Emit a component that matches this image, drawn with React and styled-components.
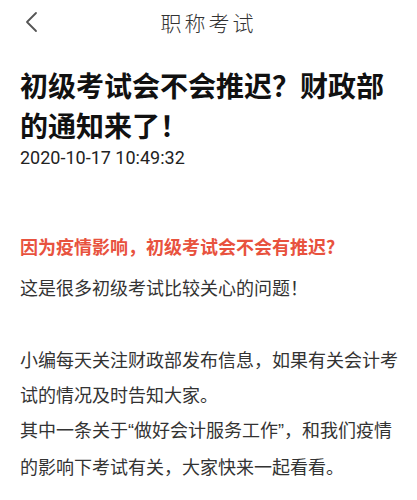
import React from "react";
import styled, { createGlobalStyle } from "styled-components";

const Global = createGlobalStyle`
  html, body { margin: 0; padding: 0; background: #fff; }
  body { font-family: Roboto, "Noto Sans CJK SC", sans-serif; -webkit-font-smoothing: antialiased; }
  * { box-sizing: border-box; }
`;

const Page = styled.div`
  width: 417px;
  height: 500px;
  overflow: hidden;
  background: #fff;
  display: flex;
  flex-direction: column;
`;

const NavBar = styled.header`
  height: 44px;
  display: grid;
  grid-template-columns: 60px 1fr 60px;
  align-items: center;
`;

const BackButton = styled.button`
  border: 0;
  background: none;
  padding: 0 0 0 24px;
  height: 44px;
  display: flex;
  align-items: center;
  color: #444;
  cursor: pointer;
`;

const NavTitle = styled.h1`
  margin: 0;
  text-align: center;
  font-family: "Noto Sans CJK SC", sans-serif;
  font-weight: 300;
  font-size: 21px;
  letter-spacing: 3px;
  color: #333;
`;

const Article = styled.article`
  padding: 21px 19px 0 20px;
`;

const Headline = styled.h2`
  margin: 0;
  font-family: "Noto Sans CJK SC", sans-serif;
  font-weight: 700;
  font-size: 28px;
  line-height: 40px;
  color: #111;
`;

const Time = styled.div`
  font-family: Roboto, sans-serif;
  font-size: 18px;
  line-height: 22px;
  color: #222;
  margin-top: 2px;
`;

const Body = styled.div`
  margin-top: 60px;
  font-family: "Noto Sans CJK SC", sans-serif;
  font-size: 18px;
  line-height: 35px;
  color: #333;
`;

const Para = styled.p`
  margin: 0 0 ${(p) => p.$gap || 0}px;
  font-weight: ${(p) => (p.$accent ? 700 : 400)};
  color: ${(p) => (p.$accent ? "#e8523e" : "#333")};
`;

const Quote = styled.span`
  font-family: "Liberation Sans", sans-serif;
`;

export default function App() {
  return (
    <Page>
      <Global />
      <NavBar>
        <BackButton aria-label="返回">
          <svg width="14" height="22" viewBox="0 0 14 22" fill="none">
            <path d="M12 2L3 11l9 9" stroke="#555" strokeWidth="1.8" strokeLinecap="round" strokeLinejoin="round" />
          </svg>
        </BackButton>
        <NavTitle>职称考试</NavTitle>
        <span />
      </NavBar>
      <Article>
        <Headline>初级考试会不会推迟？财政部的通知来了！</Headline>
        <Time>2020-10-17 10:49:32</Time>
        <Body>
          <Para $accent $gap={6}>因为疫情影响，初级考试会不会有推迟?</Para>
          <Para $gap={37}>这是很多初级考试比较关心的问题！</Para>
          <Para>小编每天关注财政部发布信息，如果有关会计考试的情况及时告知大家。</Para>
          <Para>
            其中一条关于<Quote>“</Quote>做好会计服务工作<Quote>”</Quote>，和我们疫情的影响下考试有关，大家快来一起看看。
          </Para>
        </Body>
      </Article>
    </Page>
  );
}
